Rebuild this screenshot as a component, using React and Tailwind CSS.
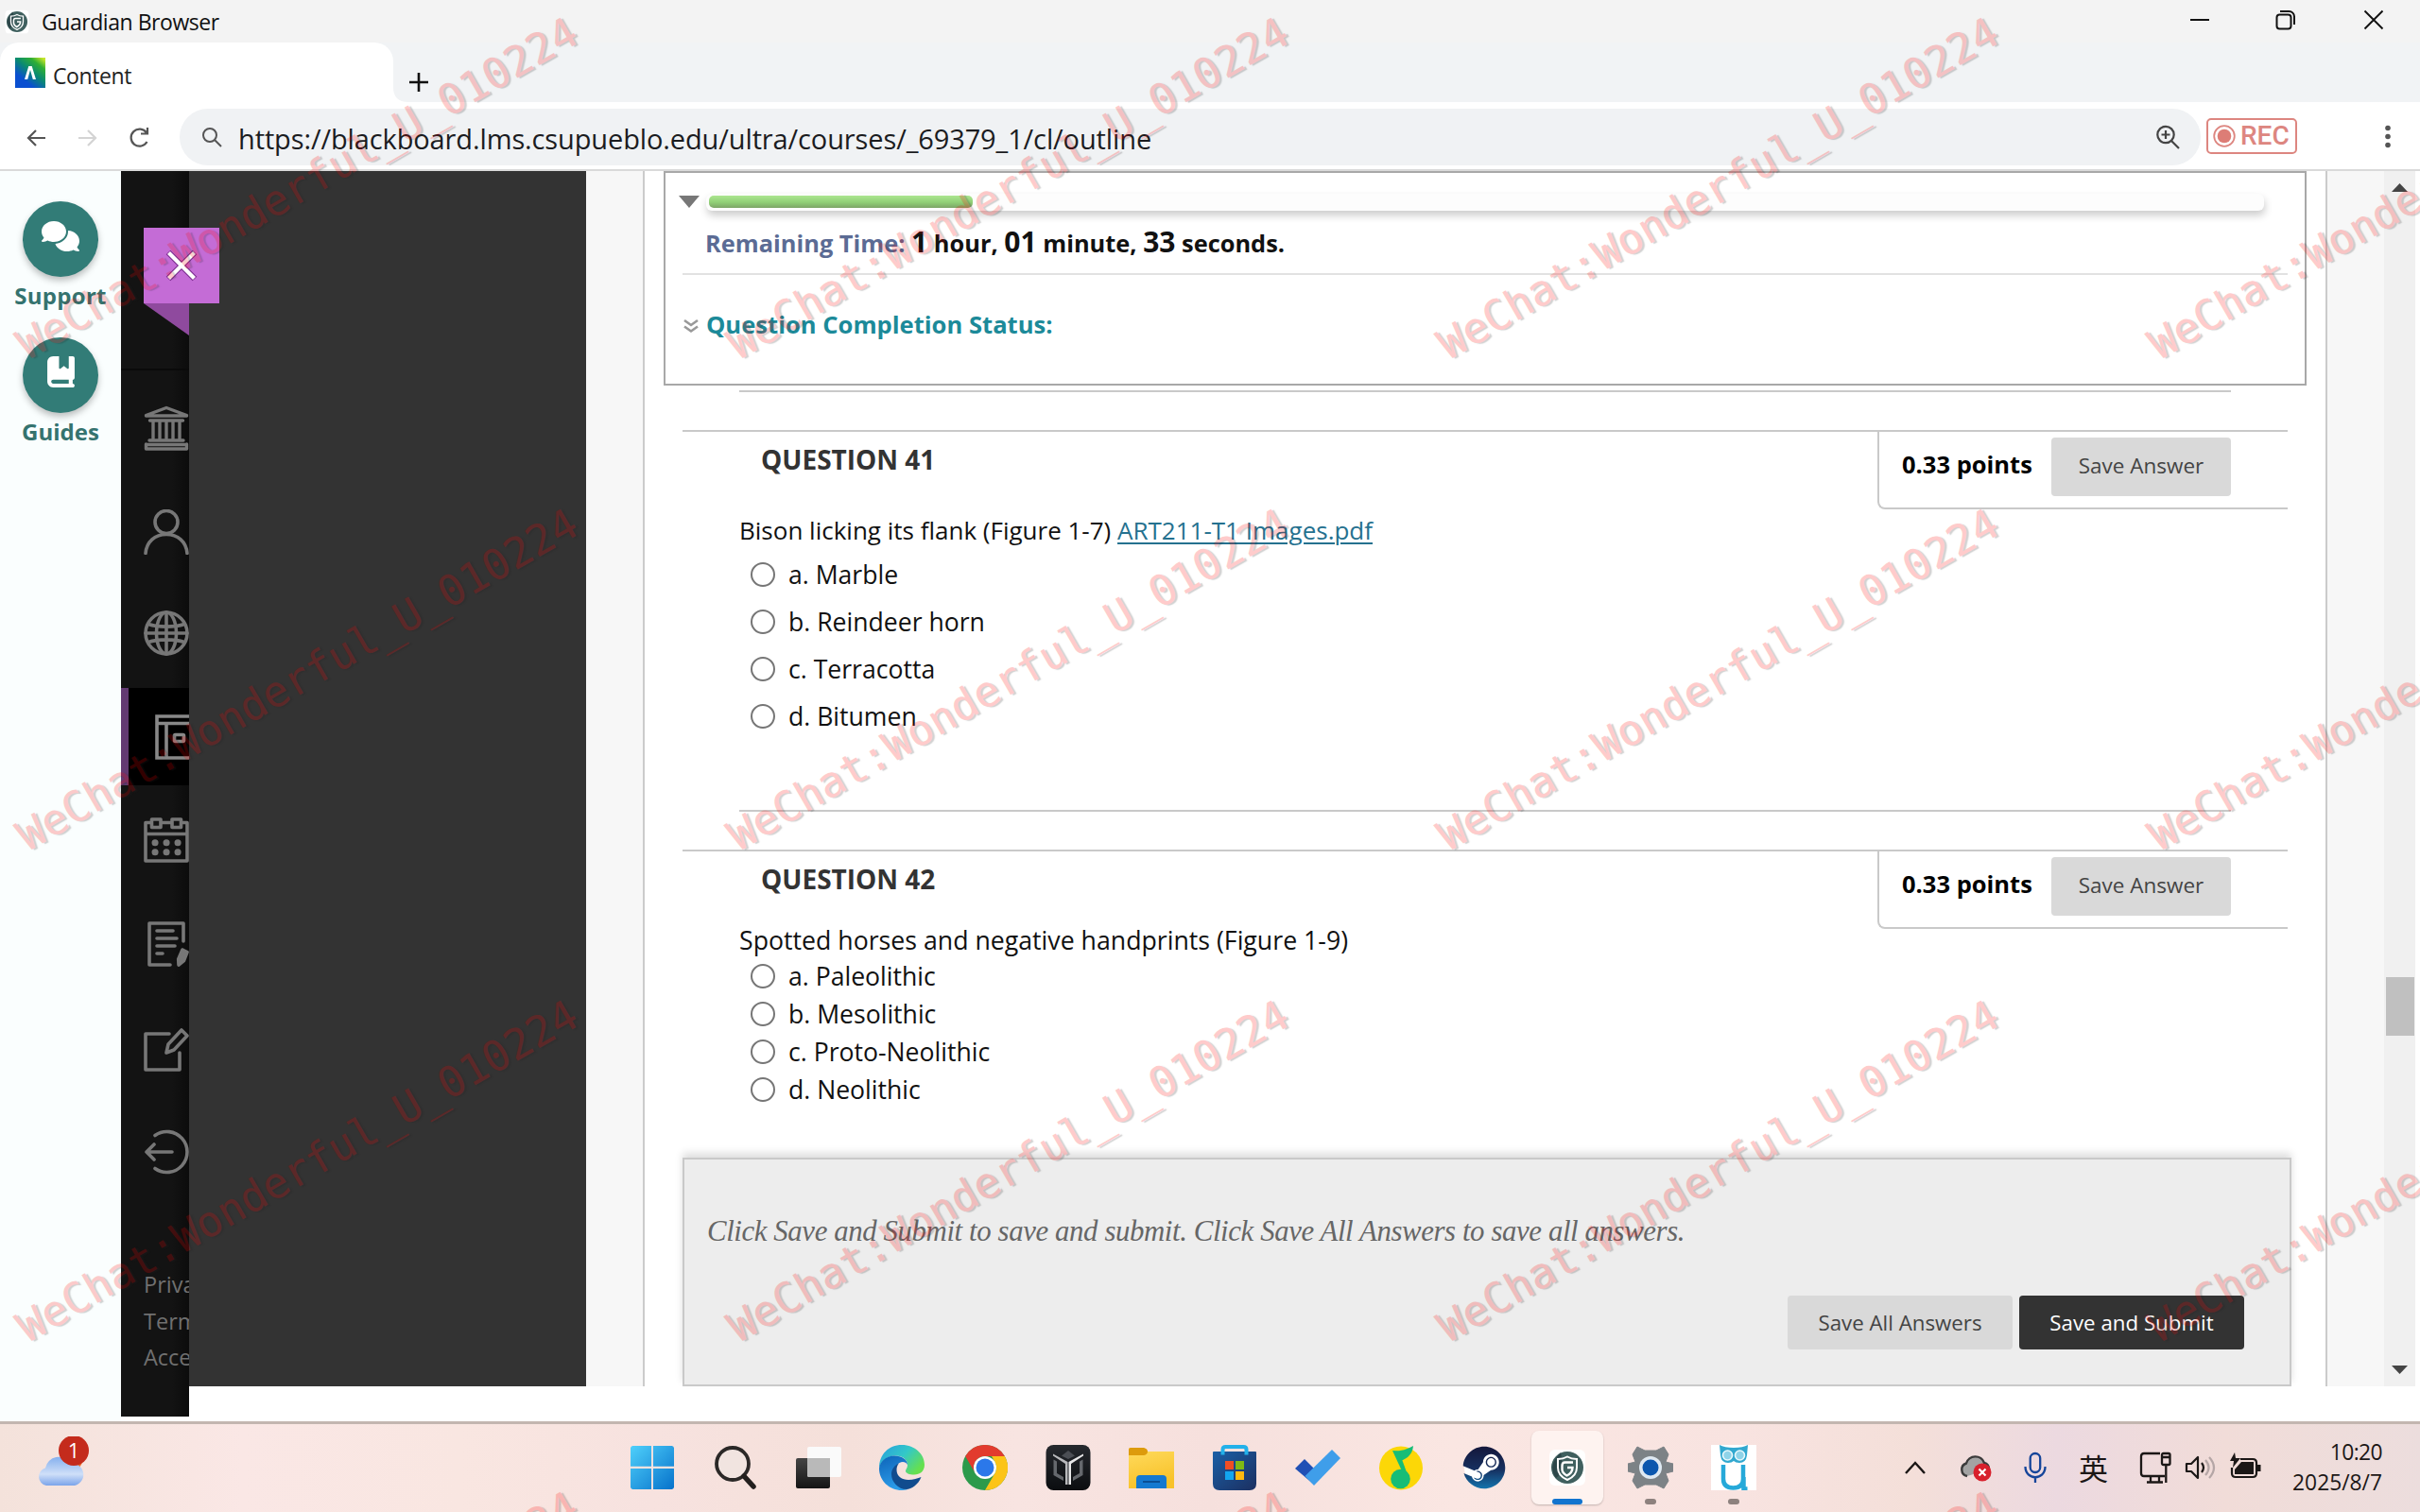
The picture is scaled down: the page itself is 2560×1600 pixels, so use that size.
import { FaComments, FaBookBookmark, FaSteam } from "react-icons/fa6";

const SANS = "font-['Open_Sans','Noto_Sans',sans-serif]";

function GuardianLogo({ className }) {
  return (
    <svg className={className} viewBox="0 0 40 40">
      <rect x="1" y="1" width="38" height="38" rx="6" fill="#fff" />
      <circle cx="20" cy="20" r="17" fill="#40605f" />
      <path d="M8 10a17 17 0 0 0 0 21c6-3 8-16 5-27z" fill="#2c4649" />
      <path d="M20 8.500c3.500 2 6.500 2.500 10 2.500v9c0 6-4 10.500-10 13-6-2.500-10-7-10-13v-9c3.500 0 6.500-.5 10-2.500z" fill="none" stroke="#fff" strokeWidth="2" />
      <path d="M26 14.500h-8.500q-3 0-3 3.500v4q0 3.500 5 6.500 6-3 6-8.500h-5.500" fill="none" stroke="#fff" strokeWidth="2.400" />
    </svg>
  );
}

function TitleBar() {
  return (
    <div className="flex h-[45px] shrink-0 items-center justify-between bg-[#f3f3f3]">
      <div className="flex items-center pl-[5px]">
        <GuardianLogo className="h-[26px] w-[26px]" />
        <span className="ml-[13px] pt-[2px] text-[23px] leading-none tracking-[-0.45px] whitespace-nowrap text-[#111]">Guardian Browser</span>
      </div>
      <svg className="h-[45px] w-[270px]" viewBox="0 0 270 45" fill="none" stroke="#111" strokeWidth="2">
        <path d="M27 21h20" />
        <rect x="118.500" y="15.500" width="15" height="15" rx="3" />
        <path d="M122 12h9.500a5.500 5.500 0 0 1 5.500 5.500V26" />
        <path d="M211.500 11.500l19 19M230.500 11.500l-19 19" strokeWidth="1.900" />
      </svg>
    </div>
  );
}

function TabStrip() {
  return (
    <div className="flex h-[63px] shrink-0 items-end bg-[#f1f3f5]">
      <div className="flex h-full w-[416px] items-center rounded-t-[20px] bg-white pl-[16px]">
        <svg className="h-8 w-8" viewBox="0 0 32 32">
          <defs>
            <linearGradient id="tabA" x1="0.1" y1="1" x2="0.900" y2="0">
              <stop offset="0.250" stopColor="#0a4fd0" />
              <stop offset="0.550" stopColor="#0a8a72" />
              <stop offset="0.800" stopColor="#2fae35" />
              <stop offset="1" stopColor="#c6e62a" />
            </linearGradient>
          </defs>
          <rect width="32" height="32" fill="url(#tabA)" />
          <path d="M10 23l4.300-14h3.400L22 23h-3.200L16 13l-2.800 10z" fill="#fff" />
        </svg>
        <span className="ml-[8px] pt-[7px] text-[23px] leading-none tracking-[-0.4px] text-[#222]">Content</span>
      </div>
      <svg className="h-[16px] w-[16px]" viewBox="0 0 16 16">
        <path d="M0 0q0 16 16 16H0z" fill="#fff" />
      </svg>
      <svg className="mb-[10px] h-[22px] w-[22px]" viewBox="0 0 22 22" stroke="#111" strokeWidth="2.600" fill="none">
        <path d="M11 1v20M1 11h20" />
      </svg>
    </div>
  );
}

function Toolbar() {
  return (
    <div className="flex h-[71px] shrink-0 items-center bg-white">
      <svg className="h-[71px] w-[190px] shrink-0" viewBox="0 0 190 71" fill="none" strokeWidth="2.200">
        <path d="M48 38H30m8-8l-8 8 8 8" stroke="#555" />
        <path d="M83 38h18m-8-8l8 8-8 8" stroke="#d4d4d4" />
        <path d="M155 32.500A9 9 0 1 0 155.500 42M156 27v6.500h-7" stroke="#555" />
      </svg>
      <div className="mt-[3px] flex h-[60px] w-[2138px] items-center rounded-full bg-[#f0f2f4] pl-[22px]">
        <svg className="h-6 w-6" viewBox="0 0 24 24" fill="none" stroke="#555" strokeWidth="2">
          <circle cx="10" cy="10" r="7" />
          <path d="M15 15l7 7" />
        </svg>
        <span className="ml-[16px] pt-[3px] text-[29px] leading-[50px] tracking-[-0.12px] whitespace-nowrap text-[#1b1c1f]">
          https://blackboard.lms.csupueblo.edu/ultra/courses/_69379_1/cl/outline
        </span>
        <svg className="mr-[21px] ml-auto h-7 w-7" viewBox="0 0 28 28" fill="none" stroke="#444" strokeWidth="2.200">
          <circle cx="12" cy="11.500" r="8.700" />
          <path d="M18 18l8 8M12 7v9M7.500 11.500h9" />
        </svg>
      </div>
      <div className="ml-[6px] flex h-[38px] w-[96px] items-center rounded-[5px] border-2 border-[#dd8680] pl-[5px]">
        <svg className="h-[26px] w-6" viewBox="0 0 24 26">
          <circle cx="12" cy="13" r="10.800" fill="#fff" stroke="#dd8680" strokeWidth="1.800" />
          <circle cx="12" cy="13" r="7.300" fill="#dd7d76" />
        </svg>
        <span className="ml-[5px] font-['Roboto',sans-serif] text-[28px] leading-none font-medium text-[#dd8680]">REC</span>
      </div>
      <svg className="mt-[4px] ml-[92px] h-8 w-2" viewBox="0 0 8 32" fill="#555">
        <circle cx="4" cy="5.500" r="2.800" />
        <circle cx="4" cy="14.500" r="2.800" />
        <circle cx="4" cy="23.500" r="2.800" />
      </svg>
    </div>
  );
}

function SupportRail() {
  return (
    <aside className="flex w-[128px] shrink-0 flex-col items-center bg-[#fafefe] pt-[32px] text-[24px] leading-[30px] font-bold text-[#35736f]">
      <div className="flex h-[80px] w-[80px] items-center justify-center rounded-full bg-[#327c77] shadow-[0_4px_7px_rgba(0,0,0,0.25)]">
        <FaComments className="mb-[6px] h-[40px] w-[40px] text-white" />
      </div>
      <span className="mt-[5px] h-[59px] tracking-[0.3px]">Support</span>
      <div className="flex h-[80px] w-[80px] items-center justify-center rounded-full bg-[#327c77] shadow-[0_4px_7px_rgba(0,0,0,0.25)]">
        <FaBookBookmark className="mb-[8px] h-[33px] w-[29px] text-white" />
      </div>
      <span className="mt-[5px]">Guides</span>
    </aside>
  );
}

function NavIcon({ children, className }) {
  return (
    <svg className={"h-[48px] w-[48px] shrink-0 " + className} viewBox="0 0 48 48" fill="none" stroke="#777" strokeWidth="3.600" strokeLinejoin="round" strokeLinecap="round">
      {children}
    </svg>
  );
}

function CourseNav() {
  return (
    <nav className="flex h-[1318px] w-[72px] shrink-0 flex-col overflow-hidden bg-[linear-gradient(90deg,#131313_75%,#0c0c0c_100%)]">
      <div className="h-[211px] shrink-0 border-b-2 border-[#0a0a0a]" />
      <NavIcon className="mt-[37px] ml-[24px]">
        <path d="M2.500 10.500L24 2.500l21.500 8M2.500 11h43M6.500 16h35M10 17v18M17 17v18M24 17v18M31 17v18M38 17v18M6 37h36M2.500 41.500h43M2.500 46h43M2.500 41v5M45.500 41v5" strokeWidth="3.400" />
      </NavIcon>
      <NavIcon className="mt-[62px] ml-[24px]">
        <ellipse cx="24" cy="13.500" rx="12" ry="12" />
        <path d="M2 46.500C3 34 12 26.500 24 26.500S45 34 46 46.500" />
      </NavIcon>
      <NavIcon className="mt-[59px] ml-[24px]">
        <circle cx="24" cy="24" r="22" />
        <ellipse cx="24" cy="24" rx="10.500" ry="22" />
        <path d="M24 2v44M2 24h44M5 14.500c10 3.500 28 3.500 38 0M5 33.500c10-3.500 28-3.500 38 0" />
      </NavIcon>
      <div className="mt-[34px] flex h-[103px] shrink-0 items-center border-l-8 border-[#633a72] bg-black pl-[16px]">
        <svg className="ml-[12px] h-[48px] w-[48px] shrink-0" viewBox="0 0 48 48" fill="none" stroke="#888" strokeWidth="3.600">
          <path d="M2 2h44v44H2zM2 9.500h44M12 10v36" />
          <rect x="20.500" y="21.500" width="10" height="7" rx="1" />
        </svg>
      </div>
      <NavIcon className="mt-[34px] ml-[24px]">
        <path d="M7 5.500H2V46h44V5.500h-5M19 5.500h10M2 17.500h44" />
        <rect x="8.500" y="2" width="9.500" height="8.500" />
        <rect x="30" y="2" width="9.500" height="8.500" />
        <path d="M12 26.800h.1M24 26.800h.1M36 26.800h.1M12 36.800h.1M24 36.800h.1M36 36.800h.1" strokeWidth="7" />
      </NavIcon>
      <NavIcon className="mt-[62px] ml-[24px]">
        <path d="M42 21V2H6v44h22M14 10h17M14 18h21M14 26h19M14 34h6" />
        <path d="M41 30l5 2.500-3.500 9L37 46l-.3-6z" fill="#777" />
      </NavIcon>
      <NavIcon className="mt-[63px] ml-[24px]">
        <path d="M27 8H2v38h36V28M24 28l2-9L40 4l6 6-14 15z" />
      </NavIcon>
      <NavIcon className="mt-[61px] ml-[24px]">
        <path d="M12 6.500a21.500 21.500 0 1 1 0 35M30 24H3m8-8l-8 8 8 8" />
      </NavIcon>
      <div className="mt-[97px] ml-[24px] flex flex-col text-[23.500px] leading-[38.500px] whitespace-nowrap text-[#707070]">
        <span>Privacy</span>
        <span>Terms</span>
        <span>Accessibility</span>
      </div>
    </nav>
  );
}

function Option({ label, className }) {
  return (
    <label className={"flex items-center " + className}>
      <span className="ml-[12px] h-[26px] w-[26px] rounded-full border-2 border-[#767676] bg-white" />
      <span className="ml-[14px] text-[26.600px] leading-[36px] text-[#111]">{label}</span>
    </label>
  );
}

function QuestionHeader({ title }) {
  return (
    <div className="ml-[40px] flex w-[1698px] items-start justify-between border-t-2 border-[#c9c9c9]">
      <h3 className="ml-[83px] text-[28px] leading-[59px] font-bold text-[#333]">{title}</h3>
      <div className="flex h-[82px] w-[434px] items-start rounded-bl-[8px] border-b-2 border-l-2 border-[#c9c9c9]">
        <span className="ml-[24px] w-[158px] text-[25.500px] leading-[69px] font-bold whitespace-nowrap">0.33 points</span>
        <button className="mt-[6px] h-[62px] w-[190px] rounded-[4px] bg-[#d9d9d9] pb-[2px] text-[22.500px] text-[#444]">Save Answer</button>
      </div>
    </div>
  );
}

function TimerBox() {
  return (
    <section className="ml-[20px] flex h-[227px] w-[1738px] shrink-0 flex-col border-2 border-[#a8a8a8] bg-white pt-[21px]">
      <div className="flex h-[19px] items-center">
        <svg className="ml-[14px] h-[13px] w-[22px]" viewBox="0 0 22 13">
          <path d="M0 0h22L11 13z" fill="#777" />
        </svg>
        <div className="ml-[7px] h-[18px] w-[1648px] rounded-[6px] bg-[#fdfdfd] px-[3px] pt-[2px] shadow-[1px_5px_8px_rgba(0,0,0,0.2)]">
          <div className="h-[13px] w-[279px] rounded-[5px] bg-[linear-gradient(180deg,#ace690_0%,#90cf76_55%,#7da567_100%)]" />
        </div>
      </div>
      <div className="mx-[18px] flex h-[68px] items-center border-b-2 border-[#e2e2e2] pl-[24px] whitespace-nowrap">
        <p className="pt-[1px] text-[25.400px] leading-[60px] font-bold text-[#111]">
          <span className="text-[#5b6b94]">Remaining Time: </span>
          <span className="text-[30px]">1</span> hour, <span className="text-[30px]">01</span> minute, <span className="text-[30px]">33</span> seconds.
        </p>
      </div>
      <div className="ml-[18px] flex h-[107px] items-center">
        <svg className="h-[16px] w-[18px]" viewBox="0 0 18 16" fill="none" stroke="#999" strokeWidth="2.600">
          <path d="M2 2l7 5 7-5M2 8.500l7 5 7-5" />
        </svg>
        <span className="ml-[7px] text-[25.600px] font-bold text-[#1c8a99]">Question Completion Status:</span>
      </div>
    </section>
  );
}

function Exam() {
  return (
    <main className="flex h-[1286px] w-[1782px] flex-col border-x-2 border-[#cbcbcb] bg-white">
      <TimerBox />
      <div className="mt-[5px] ml-[100px] h-[2px] w-[1578px] shrink-0 bg-[#c9c9c9]" />
      <div className="h-[40px] shrink-0" />
      <QuestionHeader title="QUESTION 41" />
      <p className="mt-[4px] ml-[100px] text-[26px] leading-[36px] text-[#111]">
        Bison licking its flank (Figure 1-7) <a className="text-[#25718f] underline decoration-2 underline-offset-[3px]">ART211-T1 Images.pdf</a>
      </p>
      <div className="mt-[4px] ml-[100px] flex flex-col">
        <Option label="a. Marble" className="h-[50px]" />
        <Option label="b. Reindeer horn" className="h-[50px]" />
        <Option label="c. Terracotta" className="h-[50px]" />
        <Option label="d. Bitumen" className="h-[50px]" />
      </div>
      <div className="mt-[74px] ml-[100px] h-[2px] w-[1578px] shrink-0 bg-[#c9c9c9]" />
      <div className="h-[40px] shrink-0" />
      <QuestionHeader title="QUESTION 42" />
      <p className="-mt-[6px] ml-[100px] text-[26.700px] leading-[36px] text-[#111]">Spotted horses and negative handprints (Figure 1-9)</p>
      <div className="ml-[100px] flex flex-col">
        <Option label="a. Paleolithic" className="h-[40px]" />
        <Option label="b. Mesolithic" className="h-[40px]" />
        <Option label="c. Proto-Neolithic" className="h-[40px]" />
        <Option label="d. Neolithic" className="h-[40px]" />
      </div>
      <footer className="mt-auto ml-[40px] flex h-[242px] w-[1702px] shrink-0 flex-col border-2 border-[#c9c9c9] bg-[#ededed] shadow-[0_-5px_8px_rgba(0,0,0,0.13)]">
        <p className="mt-[50px] ml-[24px] h-[60px] font-['Georgia','Liberation_Serif',serif] text-[30.800px] leading-[53px] tracking-[-0.39px] whitespace-nowrap text-[#666] italic">
          Click Save and Submit to save and submit. Click Save All Answers to save all answers.
        </p>
        <div className="mt-[34px] mr-[48px] flex justify-end gap-[7px] text-[22.300px]">
          <button className="h-[57px] w-[238px] rounded-[4px] bg-[#d9d9d9] text-[#444]">Save All Answers</button>
          <button className="h-[57px] w-[238px] rounded-[4px] bg-[#333] text-white">Save and Submit</button>
        </div>
      </footer>
    </main>
  );
}

function Scrollbar() {
  return (
    <div className="flex h-[1286px] w-[33px] flex-col items-center bg-[#f0f0f0]">
      <svg className="mt-[13px] h-[10px] w-[17px]" viewBox="0 0 17 10">
        <path d="M0 9L8.500 0 17 9z" fill="#444" />
      </svg>
      <div className="mt-[830px] h-[62px] w-[30px] bg-[#c0c0c0]" />
      <svg className="mt-auto mb-[13px] h-[9px] w-[17px]" viewBox="0 0 17 9">
        <path d="M0 0h17L8.500 9z" fill="#444" />
      </svg>
    </div>
  );
}

function TaskIcon({ children, className = "" }) {
  return (
    <svg className={"h-[48px] w-[48px] " + className} viewBox="0 0 48 48">
      {children}
    </svg>
  );
}

function Gradients() {
  return (
    <svg className="absolute h-0 w-0">
      <defs>
        <linearGradient id="win" x1="0" y1="0" x2="1" y2="1"><stop offset="0" stopColor="#4fd0fb" /><stop offset="1" stopColor="#0672cb" /></linearGradient>
        <linearGradient id="tvd" x1="0" y1="0" x2="0" y2="1"><stop offset="0" stopColor="#444" /><stop offset="1" stopColor="#151515" /></linearGradient>
        <linearGradient id="edgeTop" x1="0" y1="0" x2="1" y2="0.600"><stop offset="0.100" stopColor="#2aa5da" /><stop offset="0.550" stopColor="#33c8c8" /><stop offset="1" stopColor="#66e04e" /></linearGradient>
        <linearGradient id="edgeMid" x1="0" y1="0" x2="0.300" y2="1"><stop offset="0" stopColor="#0d63b8" /><stop offset="1" stopColor="#2b9be8" /></linearGradient>
        <linearGradient id="armor" x1="0" y1="0" x2="0" y2="1"><stop offset="0" stopColor="#26292e" /><stop offset="1" stopColor="#0b0d10" /></linearGradient>
        <linearGradient id="fold" x1="0" y1="0" x2="0.300" y2="1"><stop offset="0" stopColor="#ffdc60" /><stop offset="1" stopColor="#f8c22a" /></linearGradient>
        <linearGradient id="store" x1="0" y1="0" x2="1" y2="1"><stop offset="0" stopColor="#1a5fa6" /><stop offset="1" stopColor="#1c2f60" /></linearGradient>
        <linearGradient id="steam" x1="0" y1="0" x2="0" y2="1"><stop offset="0" stopColor="#14173b" /><stop offset="0.550" stopColor="#163060" /><stop offset="1" stopColor="#1474ad" /></linearGradient>
        <linearGradient id="cloud" x1="0" y1="0" x2="0" y2="1"><stop offset="0" stopColor="#85b0ee" /><stop offset="0.600" stopColor="#cfdff8" /><stop offset="1" stopColor="#7ba4ea" /></linearGradient>
      </defs>
    </svg>
  );
}

const cell = "flex w-[88px] shrink-0 items-center justify-center";

function PinnedApps() {
  return (
    <div className="flex h-full items-center pb-[1px]">
      <div className={cell}>
        <TaskIcon className="scale-[0.960]">
          <path d="M3 0h20v22.700H0V3a3 3 0 0 1 3-3zM25 0h20a3 3 0 0 1 3 3v19.700H25zM0 25h23v23H3a3 3 0 0 1-3-3zM25 25h23v20a3 3 0 0 1-3 3H25z" fill="url(#win)" />
        </TaskIcon>
      </div>
      <div className={cell}>
        <TaskIcon>
          <circle cx="21" cy="20" r="17" fill="#f1e4e0" stroke="#2b2827" strokeWidth="3.800" />
          <path d="M33 33l10 11" stroke="#231f1e" strokeWidth="5.500" strokeLinecap="round" />
        </TaskIcon>
      </div>
      <div className={cell}>
        <TaskIcon>
          <rect x="0" y="14" width="36" height="32" rx="2" fill="url(#tvd)" />
          <rect x="12" y="2" width="36" height="32" rx="2" fill="#fafafa" />
          <path d="M12 14h24v20H14a2 2 0 0 1-2-2z" fill="#b9b9b9" />
        </TaskIcon>
      </div>
      <div className={cell}>
        <TaskIcon>
          <path d="M0 25C0 10 10 0 24 0s24 10 24 21c0 7-5 10.500-11 10.500-5 0-9-1.500-9-4 0-2 2-3 2-6C30 16 26 11.500 17 11.500 8 11.500 1 18 0 25z" fill="url(#edgeTop)" />
          <path d="M0 25C.500 18 7 11.500 16 11.500c8 0 14 4 14 9.500-1-2-3-3-5-3-5 0-9 5-9 11 0 9 7 17 14 18.300-2 .5-4 .7-6 .7C11 48 0 38 0 25z" fill="url(#edgeMid)" />
          <path d="M21 19.500c-1.500 1.500-2.500 4-2.500 7 0 6.500 5.500 10.500 12.500 10.500 5 0 10-1.500 13.500-3-3 8-10.500 12.800-15.500 13C20 47 13 39 13 31c0-5 3-9.500 8-11.500z" fill="#114c8e" />
        </TaskIcon>
      </div>
      <div className={cell}>
        <TaskIcon>
          <circle cx="24" cy="24" r="24" fill="#2c9a4b" />
          <path d="M44.800 12A24 24 0 0 1 24 48L34.400 30A12 12 0 0 0 34.400 18L31 12z" fill="#fcc417" />
          <path d="M3.200 12A24 24 0 0 1 44.800 12H24a12 12 0 0 0-10.400 18z" fill="#e23b2e" />
          <circle cx="24" cy="24" r="12" fill="#fff" />
          <circle cx="24" cy="24" r="9.500" fill="#2b78ea" />
        </TaskIcon>
      </div>
      <div className={cell}>
        <TaskIcon>
          <rect x="0.500" y="0" width="47" height="48" rx="8" fill="url(#armor)" />
          <path d="M8 9.500l15.500 8.500V42H21V20L8 11.500z" fill="#b9babd" />
          <path d="M40 9.500L24.500 18V42H27V20l13-8.500z" fill="#e8e8e9" />
          <path d="M8.500 15.500l3.500 2V30l7 4v4L8.500 32zM39.500 15.500l-3.500 2V30l-7 4v4l10.500-6z" fill="#65686d" />
          <path d="M24 6l7 5.500-7 3.500-7-3.500z" fill="#4b4e54" />
        </TaskIcon>
      </div>
      <div className={cell}>
        <TaskIcon>
          <path d="M0 5a2 2 0 0 1 2-2h14l4 4h28v39H0z" fill="url(#fold)" />
          <path d="M0 5a2 2 0 0 1 2-2h14q4 1 4 4t-4 4H0z" fill="#dd9b0c" />
          <path d="M8 46V36q0-4 4-4h24q4 0 4 4v10z" fill="#1479d0" />
          <path d="M15 39h18" stroke="#0a4f94" strokeWidth="2" />
        </TaskIcon>
      </div>
      <div className={cell}>
        <TaskIcon>
          <path d="M1 8q0-1 1-1h44q1 0 1 1v33q0 7-7 7H8q-7 0-7-7z" fill="url(#store)" />
          <path d="M11.500 10.500V5q0-3 3-3h19q3 0 3 3v5.500" fill="none" stroke="#23b1ea" strokeWidth="4" />
          <path d="M14 17h9v9h-9z" fill="#f04e23" />
          <path d="M25 17h9v9h-9z" fill="#7fba15" />
          <path d="M14 28h9v9h-9z" fill="#12a5ef" />
          <path d="M25 28h9v9h-9z" fill="#fcb90f" />
        </TaskIcon>
      </div>
      <div className={cell}>
        <TaskIcon>
          <path d="M0 25l10-10L24 29 20 42z" fill="#2050b5" />
          <path d="M20 43L10.500 33 39 5l9 9z" fill="#3f9eea" />
        </TaskIcon>
      </div>
      <div className={cell}>
        <TaskIcon>
          <circle cx="24" cy="24.500" r="23" fill="#fcd707" />
          <path d="M16 6.500q12 0 21-5.500-1 12-14 16l7 15z" fill="#17bd76" />
          <path d="M15 6l7 1 9.500 26h-4z" fill="#17bd76" />
          <circle cx="23.500" cy="36" r="10.300" fill="#17bd76" />
        </TaskIcon>
      </div>
      <div className={cell}>
        <div className="relative h-[46px] w-[46px] rounded-full">
          <div className="m-[2px] h-[42px] w-[42px] rounded-full bg-white" />
          <FaSteam className="absolute inset-0 h-[46px] w-[46px] [&_path]:fill-[url(#steam)]" />
        </div>
      </div>
      <div className="flex h-[78px] w-[88px] shrink-0 justify-center">
        <div className="flex w-[76px] flex-col items-center rounded-[8px] bg-[#fef3f0] shadow-[0_1px_2px_rgba(0,0,0,0.22)]">
          <GuardianLogo className="mt-[19px] h-[40px] w-[40px]" />
          <div className="mt-auto h-[6px] w-[32px] rounded-full bg-[#1174cf]" />
        </div>
      </div>
      <div className="flex h-[78px] w-[88px] shrink-0 flex-col items-center pt-[15px]">
        <TaskIcon className="shrink-0">
          <path d="M10 2l8 4h12l8-4 5 8-3 8 8 2v8l-8 2 3 8-5 8-8-4H18l-8 4-5-8 3-8-8-2v-8l8-2-3-8z" fill="#7c8286" strokeLinejoin="round" stroke="#7c8286" strokeWidth="1" />
          <circle cx="24" cy="24" r="12" fill="#dfe9f2" />
          <circle cx="24" cy="24" r="8.500" fill="#0c57ae" />
        </TaskIcon>
        <div className="mt-auto h-[6px] w-[12px] rounded-full bg-[#8d817e]" />
      </div>
      <div className="flex h-[78px] w-[88px] shrink-0 flex-col items-center pt-[15px]">
        <TaskIcon className="shrink-0">
          <path d="M0 0h48v48H0z" fill="#fff" />
          <path d="M9 0q5 3 15 3T39 0l-1 11q-1 8-8 8-4 0-6-2-2 2-6 2-7 0-8-8z" fill="#31a8cf" />
          <circle cx="17.500" cy="11" r="5" fill="#8fd3e8" stroke="#e8f8fc" strokeWidth="1.600" />
          <circle cx="30.500" cy="11" r="5" fill="#8fd3e8" stroke="#e8f8fc" strokeWidth="1.600" />
          <path d="M13 21v15q0 9.500 10.500 9.500T34 36V21M34.500 34v12.500h4" fill="none" stroke="#26a9d9" strokeWidth="4.500" />
        </TaskIcon>
        <div className="mt-auto h-[6px] w-[12px] rounded-full bg-[#8d817e]" />
      </div>
    </div>
  );
}

function Tray() {
  return (
    <div className="ml-auto flex h-full items-center pr-[40px] pb-[2px] text-[#1b1716]">
      <svg className="h-[14px] w-[24px]" viewBox="0 0 24 14" fill="none" stroke="currentColor" strokeWidth="2.400">
        <path d="M2 13L12 2l10 11" />
      </svg>
      <svg className="ml-[35px] h-[32px] w-[34px]" viewBox="0 0 34 32">
        <path d="M8 25a7 7 0 0 1-1-13.500A10 10 0 0 1 26 11q5 1 5 7" fill="#a3a3a3" stroke="#3b3b3b" strokeWidth="2.400" />
        <circle cx="24" cy="21" r="9.500" fill="#d8202c" />
        <path d="M20.500 17.500l7 7M27.500 17.500l-7 7" stroke="#fff" strokeWidth="2.200" />
      </svg>
      <svg className="ml-[34px] h-[34px] w-[24px]" viewBox="0 0 24 34" fill="none" stroke="#15459a" strokeWidth="2.300">
        <rect x="6.700" y="2" width="10.500" height="20" rx="5.200" />
        <path d="M1.500 16c0 15 21 15 21 0M12 27.500V33" />
      </svg>
      <span className="ml-[34px] font-['Noto_Sans_CJK_SC',sans-serif] text-[31px] leading-[40px]">英</span>
      <svg className="ml-[33px] h-[34px] w-[34px]" viewBox="0 0 34 34" fill="none" stroke="currentColor" strokeWidth="2.300">
        <path d="M22 2H5Q2 2 2 5v18q0 3 3 3h22M12 26v6M21 26v6M8 32.500h17" />
        <rect x="24" y="2" width="8.500" height="12" rx="1.500" />
        <path d="M28.300 14v19M24 6h8" />
      </svg>
      <svg className="ml-[14px] h-[28px] w-[34px]" viewBox="0 0 34 28" fill="none" stroke="currentColor" strokeWidth="2.200" strokeLinejoin="round">
        <path d="M2 10h5l7-7v22l-7-7H2zM18 9q4 5 0 10" />
        <path d="M22 6q7 8 0 16M26 3q10 11 0 22" stroke="#b5a6a6" />
      </svg>
      <svg className="mb-[4px] ml-[14px] h-[28px] w-[34px]" viewBox="0 0 34 28">
        <path d="M11 7h13q4 0 4 4v11q0 4-4 4H6q-4 0-4-4v-6" fill="none" stroke="currentColor" strokeWidth="2.200" />
        <path d="M12 10h13v13H5v-5zM29 13h3.500v7H29zM5 0l1 6h5L3 16l1-7H0z" fill="currentColor" />
      </svg>
      <div className="flex w-[127px] flex-col items-end text-[22.800px] leading-[32px]">
        <span className="tracking-[-0.600px]">10:20</span>
        <span>2025/8/7</span>
      </div>
    </div>
  );
}

function Taskbar() {
  return (
    <div className="flex h-[96px] shrink-0 items-center border-t-[3px] border-[#c3b6b0] bg-[linear-gradient(90deg,#f4e2db_0%,#fae7e5_10%,#f9e6e1_19%,#f7e2df_27%,#f5e0da_35%,#f8e4e1_42%,#f6e0dd_50%,#fae6e2_60%,#f8e3e0_72%,#f4dfd9_79%,#ecd9e0_85%,#f1dcd8_92%,#ecdddd_100%)]">
      <div className="flex w-[646px] shrink-0">
        <svg className="mb-[12px] ml-[38px] h-[56px] w-[58px]" viewBox="0 0 58 56">
          <circle cx="40" cy="26" r="9" fill="#ee6a22" />
          <path d="M11 52a9.500 9.500 0 0 1-1-18.500A14 14 0 0 1 36 29a11.500 11.500 0 0 1 5 23z" fill="url(#cloud)" />
          <circle cx="40" cy="15" r="16" fill="#c42b1c" />
          <text x="40" y="23" textAnchor="middle" fontSize="22" fontFamily="Open Sans" fill="#fff">1</text>
        </svg>
      </div>
      <PinnedApps />
      <Tray />
    </div>
  );
}

function CloseFlag() {
  return (
    <div className="absolute top-[241px] left-[152px] flex flex-col">
      <div className="flex h-[80px] w-[80px] items-center justify-center bg-[#c46cd6]">
        <svg className="h-[34px] w-[34px]" viewBox="0 0 34 34" fill="none">
          <path d="M3 3l28 28M31 3L3 31" stroke="#7c2d90" strokeWidth="6.500" />
          <path d="M3.500 3.500l27 27M30.500 3.500l-27 27" stroke="#fff" strokeWidth="4.200" />
        </svg>
      </div>
      <svg className="h-[34px] w-[48px]" viewBox="0 0 48 34">
        <path d="M0 0h48v34z" fill="#8f4a9e" />
      </svg>
    </div>
  );
}

function Watermarks() {
  return (
    <div className="pointer-events-none absolute inset-0 overflow-hidden opacity-20">
      <div className="grid w-[3008px] auto-rows-[520px] grid-cols-[repeat(4,751.5px)] pl-[35px]">
        {Array.from({ length: 16 }, (_, i) => (
          <div key={i} className="flex h-[391px] items-end">
            <span className="origin-bottom-left -rotate-30 font-['DejaVu_Sans_Mono',monospace] text-[44.900px] leading-[52px] whitespace-nowrap text-[#ff0000] [text-shadow:2px_2px_1px_#222]">
              WeChat:Wonderful_U_010224
            </span>
          </div>
        ))}
      </div>
    </div>
  );
}

export default function App() {
  return (
    <div className={"relative flex h-[1600px] w-[2560px] flex-col overflow-hidden bg-white text-black " + SANS}>
      <Gradients />
      <TitleBar />
      <TabStrip />
      <Toolbar />
      <div className="h-[2px] shrink-0 bg-[#dadada]" />
      <div className="flex h-[1323px] shrink-0">
        <SupportRail />
        <CourseNav />
        <div className="h-[1286px] w-[420px] shrink-0 bg-[#333]" />
        <div className="flex h-[1286px] w-[1902px] shrink-0 bg-[#f7f7f7] pl-[60px]">
          <Exam />
        </div>
        <Scrollbar />
      </div>
      <Taskbar />
      <CloseFlag />
      <Watermarks />
    </div>
  );
}
